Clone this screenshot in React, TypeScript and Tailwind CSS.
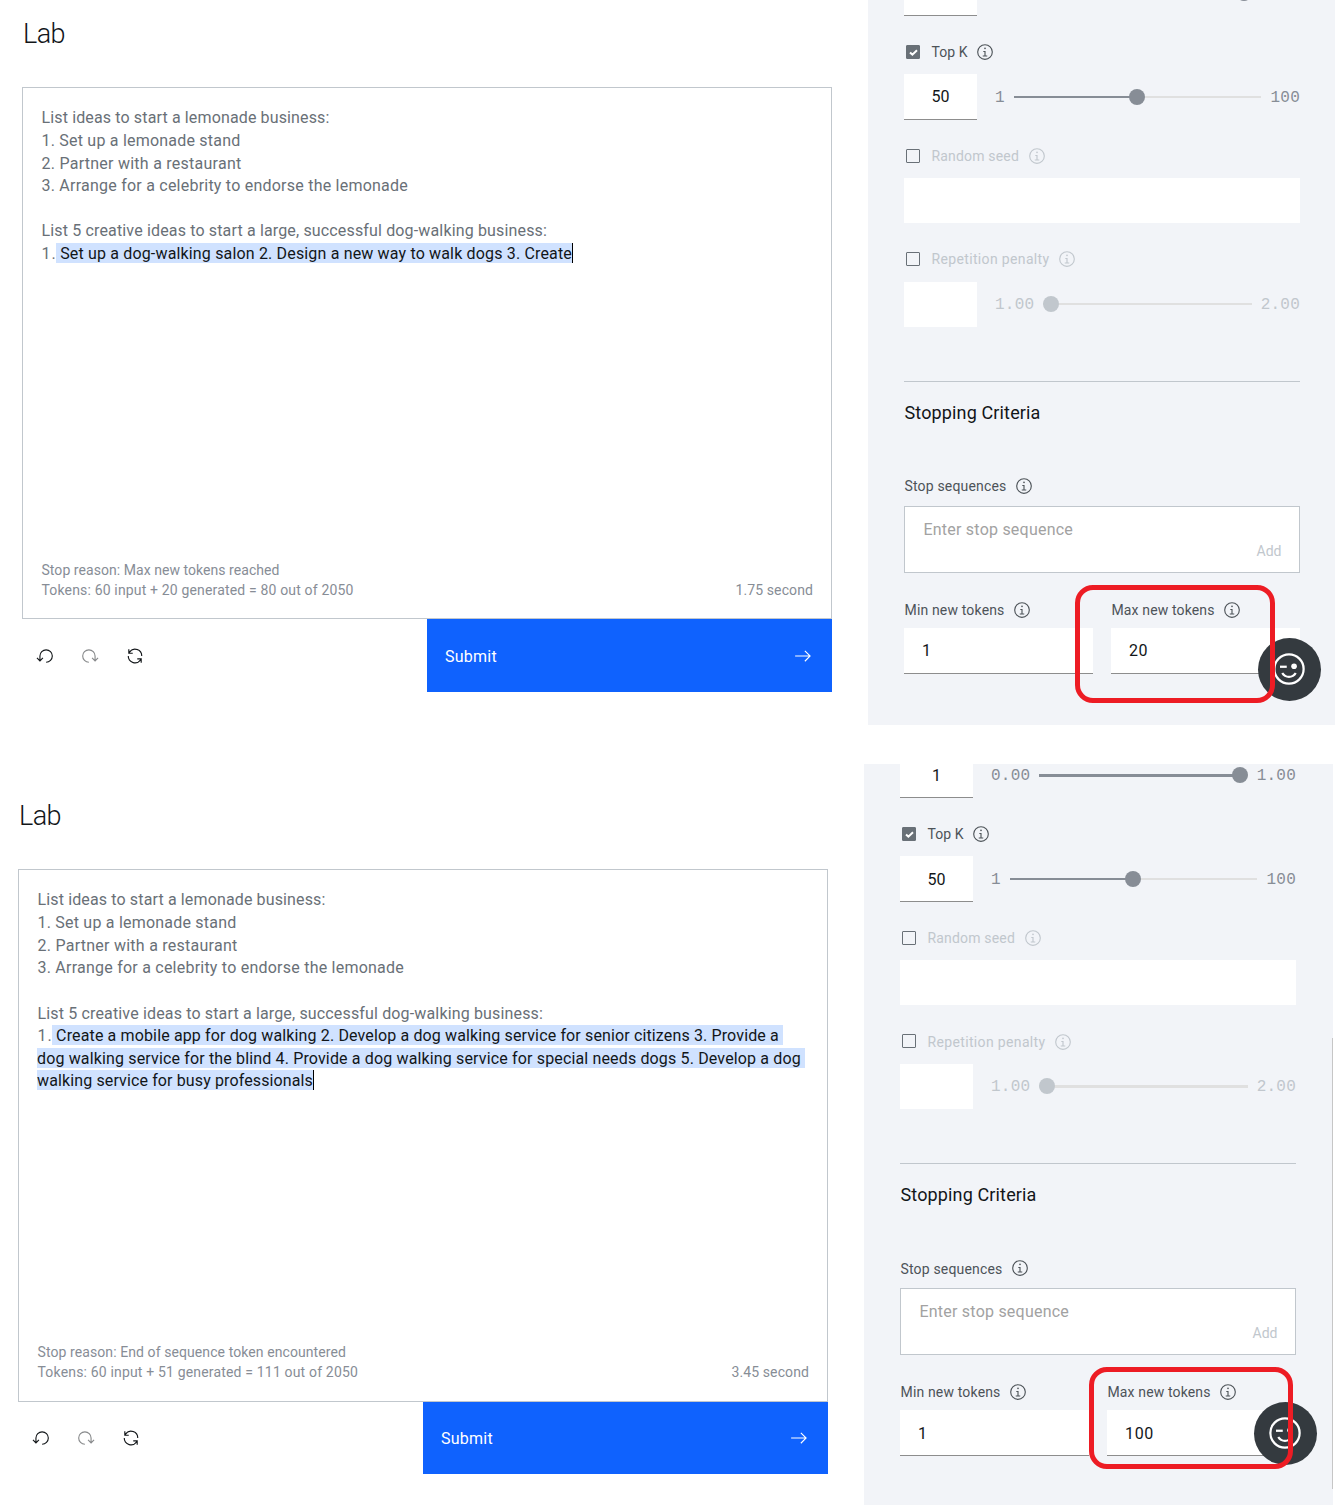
import { useLayoutEffect, useRef, useState } from 'react';
import type { ReactNode } from 'react';

/** Single line of text, tracked so that it fills the given width. */
function Fit({ w, children, className = '' }: { w: number; children: string; className?: string }) {
  const ref = useRef<HTMLSpanElement>(null);
  const [spacing, setSpacing] = useState(0);
  useLayoutEffect(() => {
    const el = ref.current;
    if (el) setSpacing((w - el.getBoundingClientRect().width) / children.length);
  }, [w, children]);
  return (
    <span className={`inline-block shrink-0 whitespace-pre ${className}`} style={{ width: w }}>
      <span ref={ref} style={{ letterSpacing: spacing }}>
        {children}
      </span>
    </span>
  );
}

function Icon({ children, className = 'size-[18px]', box = '0 0 32 32' }: { children: ReactNode; className?: string; box?: string }) {
  return (
    <svg viewBox={box} fill="currentColor" className={`shrink-0 ${className}`}>
      {children}
    </svg>
  );
}

const Info = () => (
  <Icon className="ml-[9px] size-[18px]">
    <path d="M17 22V14H13v2h2v6H12v2h8V22Z" />
    <path d="M16 8a1.5 1.5 0 1 0 1.5 1.5A1.5 1.5 0 0 0 16 8Z" />
    <path d="M16 30A14 14 0 1 1 30 16 14 14 0 0 1 16 30ZM16 4A12 12 0 1 0 28 16 12 12 0 0 0 16 4Z" />
  </Icon>
);

const resetPath = 'M18 28A12 12 0 1 0 6 16v6.2L2.4 18.6 1 20l6 6 6-6-1.4-1.4L8 22.2V16A10 10 0 1 1 18 26Z';

function CheckLabel({ checked, w, low, children }: { checked?: boolean; w: number; low?: boolean; children: string }) {
  return (
    <div className={`mt-[27px] flex h-[18px] items-center text-sm leading-[18px] ${checked ? 'text-[#4d5358]' : 'text-[#c1c7cd]'}`}>
      <span className={`mr-[11px] ml-[2px] flex size-[14px] items-center justify-center rounded-[1px] border border-[#697077] text-white ${checked ? 'bg-[#697077]' : ''}`}>
        {checked && (
          <svg viewBox="0 0 9 7" className="mt-px ml-px size-[9px]" fill="none" stroke="currentColor" strokeWidth="2">
            <path d="M1 3.4 3.4 5.6 8 1.2" />
          </svg>
        )}
      </span>
      <div className={`flex items-center ${low ? 'pt-[2px]' : ''}`}>
        <Fit w={w} className="pl-[0.5px]">{children}</Fit>
        <Info />
      </div>
    </div>
  );
}

const rangeLabel = "font-['Liberation_Mono',monospace] text-base tracking-[0.24px]";

function SliderRow({ value, min, max, at, disabled, thick, low }: { value: string; min?: string; max?: string; at: number; disabled?: boolean; thick?: boolean; low?: boolean }) {
  return (
    <div className={`flex items-center ${disabled ? 'h-[45px] text-[#c1c7cd]' : 'h-[46px] text-[#878d96]'}`}>
      <div className={`flex h-full w-[73px] items-center justify-center bg-white text-base text-[#121619] ${disabled ? '' : 'border-b border-[#8d8d8d]'} ${low ? 'pt-[2px]' : ''}`}>
        {value}
      </div>
      {min ? <span className={`ml-[18px] ${rangeLabel} ${disabled ? '' : 'pt-[2px]'}`}>{min}</span> : <span className="ml-[18px] w-[39.4px]" />}
      <div className={`relative mx-[9px] flex-1 bg-[#e0e0e0] ${thick ? 'h-[3px]' : 'h-[2px]'} ${disabled ? '-mt-px' : ''}`}>
        <div className={`h-full ${disabled ? '' : 'bg-[#878d96]'}`} style={{ width: at }} />
        <div className="absolute top-1/2 size-4 -translate-x-1/2 -translate-y-1/2 rounded-full bg-current" style={{ left: at }} />
      </div>
      {max ? <span className={`${rangeLabel} ${disabled ? '' : 'pt-[2px]'}`}>{max}</span> : <span className="w-[39.4px]" />}
    </div>
  );
}

function TokenField({ label, w, value, valueW, low }: { label: string; w: number; value: string; valueW: number; low?: boolean }) {
  return (
    <div className="w-[189px]">
      <div className="flex h-[18px] items-center text-sm leading-[18px] text-[#4d5358]">
        <Fit w={w} className="pl-[0.5px]">{label}</Fit>
        <Info />
      </div>
      <div className={`mt-[9px] flex h-[46px] items-center border-b border-[#8d8d8d] bg-white pl-[18px] text-base text-[#121619] ${low ? 'pt-[2px]' : ''}`}>
        <Fit w={valueW}>{value}</Fit>
      </div>
    </div>
  );
}

/** `full` shows the Top P range labels and the heavier slider tracks. */
function Parameters({ topP, maxTokens, maxW, full }: { topP: string; maxTokens: string; maxW: number; full?: boolean }) {
  return (
    <div className="flex w-[396px] flex-col">
      <SliderRow value={topP} min={full ? '0.00' : undefined} max={full ? '1.00' : undefined} at={201} thick={full} low={full} />
      <CheckLabel checked w={36}>Top K</CheckLabel>
      <div className="h-[13px]" />
      <SliderRow value="50" min="1" max="100" at={123} low={full} />
      <CheckLabel w={87.5}>Random seed</CheckLabel>
      <div className="mt-[13px] h-[45px] bg-white" />
      <CheckLabel w={118} low={full}>Repetition penalty</CheckLabel>
      <div className="h-[14px]" />
      <SliderRow value="" min="1.00" max="2.00" at={8} disabled thick={full} />
      <div className="mt-[54px] h-px bg-[#c1c7cd]" />
      <h2 className="mt-[19px] h-6 text-lg leading-6 text-[#121619]">
        <Fit w={136} className="pl-[0.5px]">Stopping Criteria</Fit>
      </h2>
      <div className="mt-[52px] flex h-[18px] items-center text-sm leading-[18px] text-[#4d5358]">
        <Fit w={102} className={full ? 'pt-[2px] pl-[0.5px]' : 'pl-[0.5px]'}>Stop sequences</Fit>
        <Info />
      </div>
      <div className="mt-[11px] flex h-[67px] flex-col border border-[#c1c7cd] bg-white px-[18px] pt-[13px]">
        <Fit w={149.5} className="h-5 pl-[0.5px] text-base leading-5 text-[#a2a2a2]">Enter stop sequence</Fit>
        <Fit w={25} className="mt-px h-5 self-end pl-[0.5px] text-sm leading-5 text-[#c1c7cd]">Add</Fit>
      </div>
      <div className="mt-[28px] flex gap-[18px]">
        <TokenField label="Min new tokens" w={100} value="1" valueW={9.6} low={full} />
        <TokenField label="Max new tokens" w={103} value={maxTokens} valueW={maxW} low={full} />
      </div>
    </div>
  );
}

function FeedbackButton({ className }: { className: string }) {
  return (
    <div className={`absolute flex size-[63px] items-center justify-center rounded-full bg-[#343a3f] pr-px pb-px text-white ${className}`}>
      <Icon className="size-9">
        <path d="M16 4A12 12 0 1 1 4 16 12 12 0 0 1 16 4m0-2A14 14 0 1 0 30 16 14 14 0 0 0 16 2Z" />
        <circle cx="20.5" cy="13.5" r="2.5" />
        <path d="M8 13h6v2H8Z" />
        <path d="M16 24a8 8 0 0 0 6.85-3.89l-1.72-1a6 6 0 0 1-10.26 0l-1.72 1A8 8 0 0 0 16 24Z" />
      </Icon>
    </div>
  );
}

type Output = { text: string; w: number };

const promptLines = [
  { text: 'List ideas to start a lemonade business:', w: 288, h: 'h-[23px]' },
  { text: '1. Set up a lemonade stand', w: 199, h: 'h-[23px]' },
  { text: '2. Partner with a restaurant', w: 200, h: 'h-[22px]' },
  { text: '3. Arrange for a celebrity to endorse the lemonade', w: 366.5, h: 'h-[22px]' },
];

function Lab({ output, reason, tokens, time, boxClass, questionClass, toolsClass, submitClass }: { output: Output[]; reason: Output; tokens: Output; time: string; boxClass: string; questionClass: string; toolsClass: string; submitClass: string }) {
  return (
    <div className="w-[810px]">
      <h1 className="mb-[37px] h-8 pl-[1px] text-[27px] leading-8 font-light text-[#121619]">
        <Fit w={42}>Lab</Fit>
      </h1>
      <div className={`flex flex-col border border-[#c1c7cd] px-[18px] pt-[19px] text-base leading-[22px] text-[#697077] ${boxClass}`}>
        {promptLines.map((line) => (
          <div key={line.text} className={`flex items-start ${line.h}`}>
            <Fit w={line.w} className="h-5 pl-[0.5px]">{line.text}</Fit>
          </div>
        ))}
        <div className={`flex items-start ${questionClass}`}>
          <Fit w={505.5} className="h-5 pl-[0.5px]">List 5 creative ideas to start a large, successful dog-walking business:</Fit>
        </div>
        {output.map((line, i) => (
          <div key={line.text} className={`flex items-start ${i === 0 ? 'h-[23px]' : 'h-[22px]'}`}>
            {i === 0 && <Fit w={15} className="h-5 pl-[0.5px]">1.</Fit>}
            <Fit w={line.w} className="h-5 bg-[#d0e2ff] text-[#121619]">{line.text}</Fit>
            {i === output.length - 1 && <span className="h-5 w-px bg-black" />}
          </div>
        ))}
        <div className="mt-auto flex items-end justify-between text-sm leading-5 text-[#878d96]">
          <div className="flex flex-col">
            <Fit w={reason.w} className="pl-[0.5px]">{reason.text}</Fit>
            <Fit w={tokens.w} className="pl-[0.5px]">{tokens.text}</Fit>
          </div>
          <Fit w={77.5}>{time}</Fit>
        </div>
      </div>
      <div className="flex justify-between">
        <div className={`flex gap-[27px] pl-[14px] text-[#121619] ${toolsClass}`}>
          <Icon><path d={resetPath} /></Icon>
          <Icon className="size-[18px] -scale-x-100 opacity-50"><path d={resetPath} /></Icon>
          <Icon>
            <path d="M12 10H6.78A11 11 0 0 1 27 16h2A13 13 0 0 0 6 7.68V4H4v8h8ZM20 22h5.22A11 11 0 0 1 5 16H3a13 13 0 0 0 23 8.32V28h2V20H20Z" />
          </Icon>
        </div>
        <button className={`flex w-[405px] items-center justify-between bg-[#0f62fe] pr-5 pl-[18px] text-base text-white ${submitClass}`}>
          <Fit w={52} className="pt-[2px]">Submit</Fit>
          <Icon box="0 0 16 16"><path d="M9.3 3.7 13.1 7.5H1v1h12.1l-3.8 3.8.7.7 5-5-5-5Z" /></Icon>
        </button>
      </div>
    </div>
  );
}

export default function App() {
  return (
    <div className="h-[1508px] w-[1336px] overflow-hidden bg-white font-[Roboto,sans-serif]">
      <section className="flex h-[725px]">
        <div className="w-[868px] pt-[18px] pl-[22px]">
          <Lab
            output={[{ text: ' Set up a dog-walking salon 2. Design a new way to walk dogs 3. Create', w: 516 }]}
            reason={{ text: 'Stop reason: Max new tokens reached', w: 238 }}
            tokens={{ text: 'Tokens: 60 input + 20 generated = 80 out of 2050', w: 312 }}
            time="1.75 second"
            boxClass="h-[532px] pb-[18px]"
            questionClass="mt-[23px] h-[23px]"
            toolsClass="pt-[28px]"
            submitClass="h-[73px]"
          />
        </div>
        <aside className="relative w-[467px] overflow-hidden bg-[#f2f4f8] pl-9">
          <div className="-mt-[30px]">
            <Parameters topP="" maxTokens="20" maxW={19} />
          </div>
          <FeedbackButton className="top-[638px] left-[390px]" />
          <div className="absolute top-[585px] left-[207px] h-[118px] w-[200px] rounded-[18px] border-[5px] border-[#ed1c24]" />
        </aside>
      </section>
      <section className="mt-[39px] flex h-[741px]">
        <div className="w-[864px] pt-[36px] pl-[18px]">
          <Lab
            output={[
              { text: ' Create a mobile app for dog walking 2. Develop a dog walking service for senior citizens 3. Provide a ', w: 731 },
              { text: 'dog walking service for the blind 4. Provide a dog walking service for special needs dogs 5. Develop a dog ', w: 768 },
              { text: 'walking service for busy professionals', w: 276 },
            ]}
            reason={{ text: 'Stop reason: End of sequence token encountered', w: 308.5 }}
            tokens={{ text: 'Tokens: 60 input + 51 generated = 111 out of 2050', w: 320.5 }}
            time="3.45 second"
            boxClass="h-[533px] pb-[19px]"
            questionClass="mt-6 h-[22px]"
            toolsClass="pt-[27px]"
            submitClass="h-[72px]"
          />
        </div>
        <aside className="relative w-[469px] overflow-hidden bg-[#f2f4f8] pl-9">
          <div className="-mt-[12px]">
            <Parameters topP="1" maxTokens="100" maxW={29} full />
          </div>
          <div className="absolute top-[274px] right-0 h-[451px] w-px bg-[#c6c6c6]" />
          <FeedbackButton className="top-[638px] left-[390px]" />
          <div className="absolute top-[603px] left-[225px] h-[102px] w-[204px] rounded-[18px] border-[5px] border-[#ed1c24]" />
        </aside>
      </section>
    </div>
  );
}
